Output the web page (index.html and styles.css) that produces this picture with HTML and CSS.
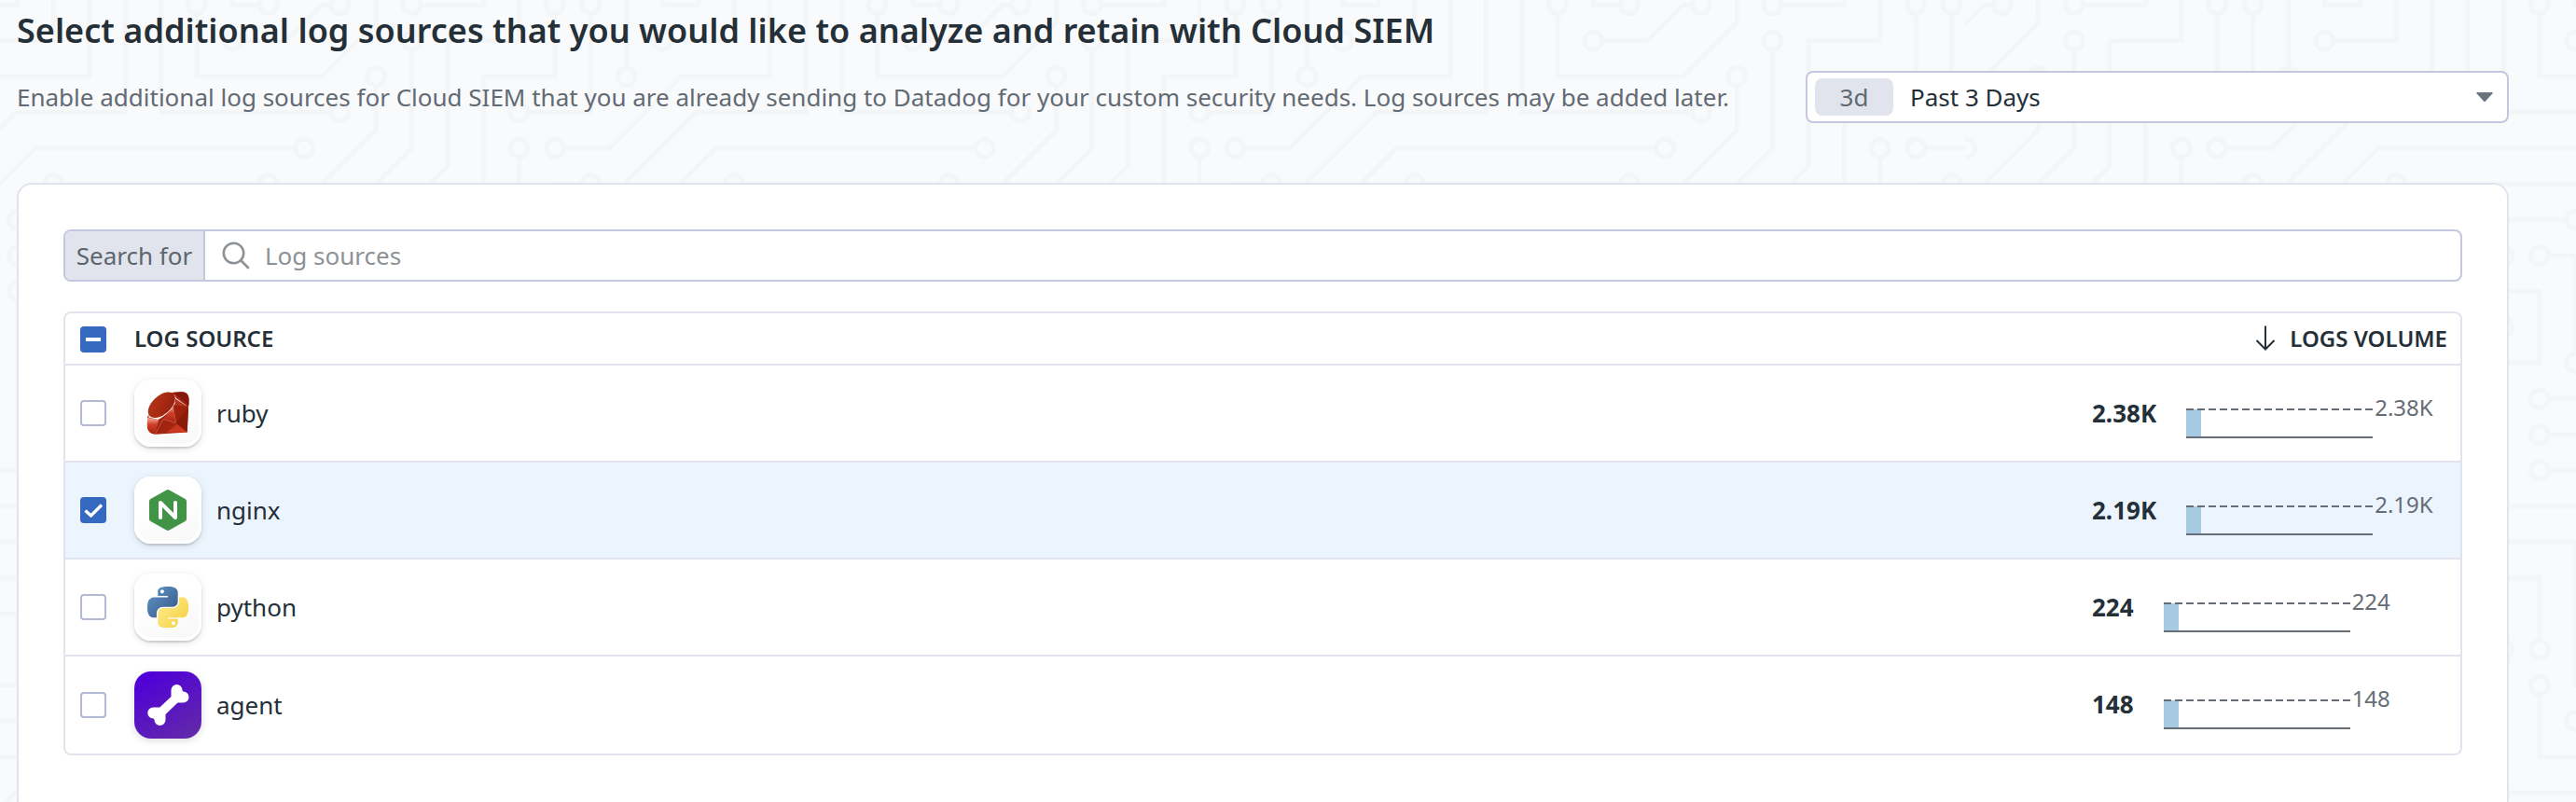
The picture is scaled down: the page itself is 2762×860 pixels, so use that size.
FILE: index.html
```html
<!DOCTYPE html>
<html lang="en">
<head>
<meta charset="utf-8">
<title>Cloud SIEM log sources</title>
<link rel="stylesheet" href="styles.css">
</head>
<body>
<svg class="backdrop" width="2762" height="860" aria-hidden="true">
  <defs>
    <g id="circuit">
      <path class="trace" d="M44.1 224a5 5 0 1 1 0 2H0v-2h44.1zm160 48a5 5 0 1 1 0 2H82v-2h122.1zm57.8-46a5 5 0 1 1 0-2H304v2h-42.1zm0 16a5 5 0 1 1 0-2H304v2h-42.1zm6.2-114a5 5 0 1 1 0 2h-86.2a5 5 0 1 1 0-2h86.2zm-256-48a5 5 0 1 1 0 2H0v-2h12.1zm185.8 34a5 5 0 1 1 0-2h86.2a5 5 0 1 1 0 2h-86.2zM258 12.1a5 5 0 1 1-2 0V0h2v12.1zm-64 208a5 5 0 1 1-2 0v-54.2a5 5 0 1 1 2 0v54.2zm48-198.2V80h62v2h-64V21.9a5 5 0 1 1 2 0zm16 16V64h46v2h-48V37.9a5 5 0 1 1 2 0zm-128 96V208h16v12.1a5 5 0 1 1-2 0V210h-16v-76.1a5 5 0 1 1 2 0zm-5.9-21.9a5 5 0 1 1 0 2H114v48H85.9a5 5 0 1 1 0-2H112v-48h12.1zm-6.2 130a5 5 0 1 1 0-2H176v-74.1a5 5 0 1 1 2 0V242h-60.1zm-16-64a5 5 0 1 1 0-2H114v48h10.1a5 5 0 1 1 0 2H112v-48h-10.1zM66 284.1a5 5 0 1 1-2 0V274H50v30h-2v-32h18v12.1zM236.1 176a5 5 0 1 1 0 2H226v94h48v32h-2v-30h-48v-98h12.1zm25.8-30a5 5 0 1 1 0-2H274v44.1a5 5 0 1 1-2 0V146h-10.1zm-64 96a5 5 0 1 1 0-2H208v-80h16v-14h-42.1a5 5 0 1 1 0-2H226v18h-16v80h-12.1zm86.2-210a5 5 0 1 1 0 2H272V0h2v32h10.1zM98 101.9V146H53.9a5 5 0 1 1 0-2H96v-42.1a5 5 0 1 1 2 0zM53.9 34a5 5 0 1 1 0-2H80V0h2v34H53.9zm60.1 3.9V66H82v64H69.9a5 5 0 1 1 0-2H80V64h32V37.9a5 5 0 1 1 2 0zM101.9 82a5 5 0 1 1 0-2H128V37.9a5 5 0 1 1 2 0V82h-28.1zm16-64a5 5 0 1 1 0-2H146v44.1a5 5 0 1 1-2 0V18h-26.1zm102.2 270a5 5 0 1 1 0 2H98v14h-2v-16h124.1zM242 149.9V160h16v34h-16v62h48v48h-2v-46h-48v-66h16v-30h-16v-12.1a5 5 0 1 1 2 0zM53.9 18a5 5 0 1 1 0-2H64V2H48V0h18v18H53.9zm112 32a5 5 0 1 1 0-2H192V0h50v2h-48v48h-28.1zm-48-48a5 5 0 0 1-9.8-2h2.07a3 3 0 1 0 5.66 0H178v34h-18V21.9a5 5 0 1 1 2 0V32h14V2h-58.1zm0 96a5 5 0 1 1 0-2H137l32-32h39V21.9a5 5 0 1 1 2 0V66h-40.17l-32 32H117.9zm28.1 90.1a5 5 0 1 1-2 0v-76.51L175.59 80H224V21.9a5 5 0 1 1 2 0V82h-49.59L146 112.41v75.69zm16 32a5 5 0 1 1-2 0v-99.51L184.59 96H300.1a5 5 0 0 1 3.9-3.9v2.07a3 3 0 0 0 0 5.66v2.07a5 5 0 0 1-3.9-3.9H185.41L162 121.41v98.69zm-144-64a5 5 0 1 1-2 0v-3.51l48-48V48h32V0h2v50H66v55.41l-48 48v2.69zM50 53.9v43.51l-48 48V208h26.1a5 5 0 1 1 0 2H0v-65.41l48-48V53.9a5 5 0 1 1 2 0zm-16 16V89.41l-34 34v-2.82l32-32V69.9a5 5 0 1 1 2 0zM12.1 32a5 5 0 1 1 0 2H9.41L0 43.41V40.6L8.59 32h3.51zm265.8 18a5 5 0 1 1 0-2h18.69l7.41-7.41v2.82L297.41 50H277.9zm-16 160a5 5 0 1 1 0-2H288v-71.41l16-16v2.82l-14 14V210h-28.1zm-208 32a5 5 0 1 1 0-2H64v-22.59L40.59 194H21.9a5 5 0 1 1 0-2H41.41L66 216.59V242H53.9zm150.2 14a5 5 0 1 1 0 2H96v-56.6L56.6 162H37.9a5 5 0 1 1 0-2h19.5L98 200.6V256h106.1zm-150.2 2a5 5 0 1 1 0-2H80v-46.59L48.59 178H21.9a5 5 0 1 1 0-2H49.41L82 208.59V258H53.9zM34 39.8v1.61L9.41 66H0v-2h8.59L32 40.59V0h2v39.8zM2 300.1a5 5 0 0 1 3.9 3.9H3.83A3 3 0 0 0 0 302.17V256h18v48h-2v-46H2v42.1zM34 241v63h-2v-62H0v-2h34v1zM17 18H0v-2h16V0h2v18h-1zm273-2h14v2h-16V0h2v16zm-32 273v15h-2v-14h-14v14h-2v-16h18v1zM0 92.1A5.02 5.02 0 0 1 6 97a5 5 0 0 1-6 4.9v-2.07a3 3 0 1 0 0-5.66V92.1zM80 272h2v32h-2v-32zm37.9 32h-2.07a3 3 0 0 0-5.66 0h-2.07a5 5 0 0 1 9.8 0zM5.9 0A5.02 5.02 0 0 1 0 5.9V3.83A3 3 0 0 0 3.83 0H5.9zm294.2 0h2.07A3 3 0 0 0 304 3.83V5.9a5 5 0 0 1-3.9-5.9zm3.9 300.1v2.07a3 3 0 0 0-1.83 1.83h-2.07a5 5 0 0 1 3.9-3.9z"/>
      <path class="hole" d="M49 225h0M209 273h0M257 225h0M257 241h0M273 129h0M177 129h0M17 81h0M193 113h0M289 113h0M257 17h0M193 225h0M193 161h0M241 17h0M257 33h0M129 129h0M145 225h0M129 113h0M81 161h0M113 241h0M177 161h0M97 177h0M129 225h0M65 289h0M241 177h0M257 145h0M273 193h0M193 241h0M177 145h0M289 33h0M97 97h0M49 145h0M49 33h0M113 33h0M65 129h0M97 81h0M129 33h0M113 17h0M145 65h0M225 289h0M241 145h0M49 17h0M161 49h0M161 17h0M113 97h0M209 17h0M145 193h0M225 17h0M161 225h0M17 161h0M49 49h0M33 209h0M33 65h0M17 33h0M273 49h0M257 209h0M49 241h0M17 193h0M209 257h0M33 161h0M49 257h0M17 177h0"/>
    </g>
    <pattern id="tile-a" width="304" height="304" patternUnits="userSpaceOnUse" patternTransform="translate(-405.8 -74) scale(2.4)"><use href="#circuit"/></pattern>
    <pattern id="tile-b" width="304" height="304" patternUnits="userSpaceOnUse" patternTransform="translate(2106 -74) scale(2.4)"><use href="#circuit"/></pattern>
  </defs>
  <rect width="2107" height="860" fill="url(#tile-a)"/>
  <rect x="2107" width="655" height="860" fill="url(#tile-b)"/>
</svg>

<main class="page">
  <h1 class="title">Select additional log sources that you would like to analyze and retain with Cloud SIEM</h1>
  <div class="intro">
    <p class="description">Enable additional log sources for Cloud SIEM that you are already sending to Datadog for your custom security needs. Log sources may be added later.</p>
    <div class="timeframe">
      <span class="timeframe-badge">3d</span>
      <span class="timeframe-label">Past 3 Days</span>
      <svg class="caret" width="18" height="10" viewBox="0 0 18 10"><path d="M1 0h16q1.500 0 .5 1.200L10 9.400q-1 1-2 0L.5 1.200Q-.5 0 1 0z" fill="#6c757d"/></svg>
    </div>
  </div>

  <section class="card">
    <div class="search">
      <span class="search-addon">Search for</span>
      <svg class="search-icon" width="30" height="30" viewBox="0 0 30 30" fill="none" stroke="#8d9297" stroke-width="2.600"><circle cx="12.500" cy="12.500" r="10.700"/><path d="M20 20l8 8" stroke-linecap="round"/></svg>
      <span class="search-placeholder">Log sources</span>
    </div>

    <div class="table">
      <div class="row head">
        <span class="checkbox on"><svg width="28" height="28" viewBox="0 0 28 28"><path d="M6 12h16v4H6z" fill="#fff"/></svg></span>
        <span class="col-name">LOG SOURCE</span>
        <span class="col-volume"><svg width="22" height="28" viewBox="0 0 22 28" fill="none" stroke="#242f38" stroke-width="2"><path d="M11 0.500v25M1.500 16l9.500 9.500 9.500-9.500"/></svg>LOGS VOLUME</span>
      </div>

      <div class="row">
        <span class="checkbox"></span>
        <span class="logo">
          <svg width="46" height="46" viewBox="0 0 46 46">
            <defs>
              <linearGradient id="rb-body" x1="0" y1="0" x2="1" y2="1"><stop offset="0" stop-color="#b92e18"/><stop offset=".6" stop-color="#a02410"/><stop offset="1" stop-color="#b82b16"/></linearGradient>
              <linearGradient id="rb-crown" x1="0" y1="0" x2="1" y2="1"><stop offset="0" stop-color="#b2361b"/><stop offset=".5" stop-color="#a92a12"/><stop offset="1" stop-color="#8f1f0c"/></linearGradient>
              <linearGradient id="rb-facet" x1="0" y1="0" x2="0" y2="1"><stop offset="0" stop-color="#f3b3a5"/><stop offset=".4" stop-color="#cf422a"/><stop offset="1" stop-color="#a8220e"/></linearGradient>
            </defs>
            <path d="M28 .8L38 .3q7.500.2 7.500 8L43.700 43.500 10 45.700Q.5 45.500.8 36L1 27z" fill="url(#rb-body)"/>
            <path d="M1 28L1 37Q1.500 45 9.500 45.500L13 30z" fill="url(#rb-facet)"/>
            <path d="M28.500 15L18 29.500l13.500 4z" fill="url(#rb-facet)"/>
            <path d="M28.500 15l3 18.500L45 17z" fill="#9e210e"/>
            <path d="M29 1l16.500 14V8Q45 .5 38 .3z" fill="#84180a"/>
            <path d="M31.500 33.500l12.200 10L45 17z" fill="#8b1a0a"/>
            <path d="M22 43.500l21.700 0L33 35z" fill="#cc3720"/>
            <path d="M28.500 15l3 18.500L18 29.500 9.500 45.500" stroke="#d46f5d" stroke-width=".6" fill="none"/>
            <path d="M29.800 3L32 7l11 8-13-1.500L26.500 19q-6 7-14 11L2 27.500 4 24l11 1z" fill="#fff3f0"/>
            <path d="M31 7.500l13 8.500-13.500-2z" fill="#b23520"/>
            <ellipse cx="16.300" cy="14.300" rx="17.400" ry="9.900" transform="rotate(-42 16.300 14.300)" fill="url(#rb-crown)"/>
          </svg>
        </span>
        <span class="name">ruby</span>
        <span class="volume"><b>2.38K</b><svg class="spark" width="200" height="34" viewBox="0 0 200 34"><path d="M0 3h16v29H0z" fill="#a6cae1"/><path d="M0 3h200" class="limit"/><path d="M0 33h200" class="base"/></svg><span class="max">2.38K</span></span>
      </div>

      <div class="row selected">
        <span class="checkbox on"><svg width="28" height="28" viewBox="0 0 28 28"><path d="M5.500 14.500l6 5.500L23 8.500" fill="none" stroke="#fff" stroke-width="3.400"/></svg></span>
        <span class="logo">
          <svg width="46" height="46" viewBox="0 0 46 46">
            <path d="M21.500 1.400q1.500-.8 3 0L41.500 11q1.500.9 1.500 2.600v18.800q0 1.700-1.500 2.600l-17 9.600q-1.500.8-3 0L4.500 35Q3 34.100 3 32.400V13.600Q3 11.900 4.500 11z" fill="#419445"/>
            <path d="M15 31V15L31 31V15" fill="none" stroke="#fff" stroke-width="4" stroke-linecap="round" stroke-linejoin="round"/>
          </svg>
        </span>
        <span class="name">nginx</span>
        <span class="volume"><b>2.19K</b><svg class="spark" width="200" height="34" viewBox="0 0 200 34"><path d="M0 3h16v29H0z" fill="#a6cae1"/><path d="M0 3h200" class="limit"/><path d="M0 33h200" class="base"/></svg><span class="max">2.19K</span></span>
      </div>

      <div class="row">
        <span class="checkbox"></span>
        <span class="logo">
          <svg width="44" height="44" viewBox="0 0 110 110">
            <defs>
              <linearGradient id="py1" x1="0" y1="0" x2="1" y2="1"><stop offset="0" stop-color="#5a9fd4"/><stop offset=".2" stop-color="#5a8bbf"/><stop offset="1" stop-color="#33557f"/></linearGradient>
              <linearGradient id="py2" x1=".2" y1=".2" x2=".9" y2=".8"><stop offset="0" stop-color="#fbe982"/><stop offset="1" stop-color="#f6d146"/></linearGradient>
            </defs>
            <path d="M54.300 0C49.700 0 45.400.4 41.500 1.100 30.200 3.100 28.100 7.300 28.100 15v10.200h26.800v3.400H18.100c-7.800 0-14.600 4.700-16.700 13.600-2.500 10.200-2.600 16.600 0 27.300 1.900 7.900 6.400 13.600 14.200 13.600h9.200V70.800c0-8.800 7.700-16.700 16.700-16.700h26.700c7.400 0 13.400-6.100 13.400-13.600V15c0-7.200-6.100-12.700-13.400-13.900C63.600.3 58.800 0 54.300 0zM39.800 8.200c2.800 0 5 2.300 5 5.100s-2.300 5.100-5 5.100-5-2.300-5-5.100 2.200-5.100 5-5.100z" fill="url(#py1)"/>
            <path d="M85 28.600v11.900c0 9.200-7.800 17-16.700 17H41.500c-7.300 0-13.400 6.300-13.400 13.600v25.500c0 7.200 6.300 11.500 13.400 13.600 8.500 2.500 16.600 2.900 26.800 0 6.700-1.900 13.400-5.900 13.400-13.600V86.400H54.900V83h40.200c7.800 0 10.700-5.400 13.400-13.600 2.800-8.400 2.700-16.500 0-27.300-1.900-7.800-5.600-13.600-13.400-13.600H85zM70 93.200c2.800 0 5 2.300 5 5.100s-2.200 5.100-5 5.100-5-2.300-5-5.100 2.200-5.100 5-5.100z" fill="url(#py2)"/>
          </svg>
        </span>
        <span class="name">python</span>
        <span class="volume"><b>224</b><svg class="spark" width="200" height="34" viewBox="0 0 200 34"><path d="M0 3h16v29H0z" fill="#a6cae1"/><path d="M0 3h200" class="limit"/><path d="M0 33h200" class="base"/></svg><span class="max">224</span></span>
      </div>

      <div class="row">
        <span class="checkbox"></span>
        <span class="logo agent">
          <svg width="46" height="46" viewBox="0 0 46 46" fill="#fff">
            <path d="M26.500 14V7a6 6 0 0 1 12 0q0 1.300 1 1.500a6 6 0 0 1 0 12h-6L20.500 33v6a6 6 0 0 1-12 0q0-1.500-1.200-1.500a6 6 0 0 1 0-12h7z"/>
          </svg>
        </span>
        <span class="name">agent</span>
        <span class="volume"><b>148</b><svg class="spark" width="200" height="34" viewBox="0 0 200 34"><path d="M0 3h16v29H0z" fill="#a6cae1"/><path d="M0 3h200" class="limit"/><path d="M0 33h200" class="base"/></svg><span class="max">148</span></span>
      </div>
    </div>
  </section>
</main>
</body>
</html>
```
FILE: styles.css
```css
* { box-sizing: border-box; }
body {
  margin: 0;
  height: 860px;
  overflow: hidden;
  position: relative;
  background: #f9fafc;
  color: #242f38;
  font: 26px/36px "Noto Sans", sans-serif;
}
.backdrop { position: absolute; top: 0; left: 0; z-index: -1; }
.trace { fill: #f4f5f7; }
.hole { fill: none; stroke: #f9fafc; stroke-width: 6; stroke-linecap: round; }

.page { width: 2690px; padding-left: 18px; }
.title { margin: 0; padding-top: 10px; font-size: 36px; line-height: 46px; font-weight: 600; letter-spacing: .02px; white-space: nowrap; }
.intro { display: flex; justify-content: space-between; align-items: center; height: 56px; margin-top: 20px; }
.description { margin: 0; color: #626b73; white-space: nowrap; }
.timeframe {
  display: flex; align-items: center;
  width: 754px; height: 56px; padding: 0 15px 0 8px;
  border: 2px solid #c3c8e0; border-radius: 8px; background: #fff;
}
.timeframe-badge { width: 84px; height: 40px; line-height: 40px; border-radius: 8px; background: #e1e4ed; color: #626b73; text-align: center; }
.timeframe-label { margin-left: 18px; flex: 1; }

.card { height: 700px; margin-top: 64px; padding: 48px; border: 2px solid #e1e4ed; border-radius: 16px; background: #fff; }
.search { display: flex; align-items: center; height: 56px; border: 2px solid #c3c8e0; border-radius: 8px; overflow: hidden; }
.search-addon { display: flex; align-items: center; justify-content: center; width: 150px; height: 52px; background: #e1e4ed; border-right: 2px solid #c3c8e0; color: #5d666e; }
.search-icon { margin: 0 16px 0 18px; }
.search-placeholder { color: #8d9297; }

.table { margin-top: 32px; border: 2px solid #e1e4ed; border-radius: 8px; overflow: hidden; }
.row { display: flex; align-items: center; height: 104px; padding: 0 14px 0 16px; border-bottom: 2px solid #e1e4ed; }
.row:last-child { border-bottom: 0; }
.row.selected { background: #ecf5fd; }
.row.head { height: 56px; font-size: 24px; font-weight: 600; }
.checkbox { flex: none; width: 28px; height: 28px; border: 2px solid #b3b9d4; border-radius: 4px; background: #fff; margin-right: 30px; }
.checkbox.on { border: 0; background: #3568bf; }
.head .checkbox { margin-top: 2px; }
.checkbox svg { display: block; }
.col-volume { margin-left: auto; display: flex; align-items: center; gap: 15px; }
.logo {
  flex: none; display: flex; align-items: center; justify-content: center;
  width: 72px; height: 72px; margin-right: 16px; border-radius: 18px;
  background: linear-gradient(160deg, #fff 40%, #f7f7f7);
  box-shadow: inset 0 0 0 3px #fff, 0 2px 2px rgba(0,0,0,.14), 0 2px 8px rgba(0,0,0,.12);
}
.logo.agent { background: linear-gradient(150deg, #5000d8 10%, #632ca6); box-shadow: 0 2px 8px rgba(0,0,0,.14); }
.volume { display: flex; align-items: center; width: 381px; margin-left: auto; }
.row:last-child .volume { margin-bottom: 2px; }
.volume b { font-weight: 700; }
.spark { flex: none; margin: 20px 0 0 32px; }
.limit { stroke: #666d76; stroke-width: 2; stroke-dasharray: 8 4; }
.base { stroke: #666d76; stroke-width: 2; }
.max { color: #666d76; font-size: 24px; margin: -12px 0 0 2px; }
```
